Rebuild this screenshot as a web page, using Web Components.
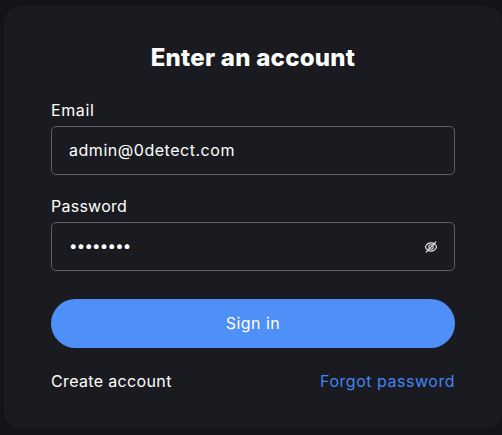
<!DOCTYPE html>
<html lang="en">
<head>
<meta charset="utf-8">
<title>Enter an account</title>
<style>
    html, body{
        height: 100%;
    }
    body{
        margin: 0;
        box-sizing: border-box;
        padding: 6px 0 7px 4px;
        overflow: hidden;
        background-color: #131418;
        color: #ffffff;
        font-family: Inter, "Open Sans", sans-serif;
        font-size: 16px;
        line-height: 20px;
    }
    .email{
        --label-spacing: 0.6px;
        --value-spacing: 0.53px;
    }
    .password{
        --label-spacing: 0.25px;
        --value-size: 15px;
        --value-spacing: -0.75px;
    }
    .forgot{
        letter-spacing: 0.52px;
    }
</style>
</head>
<body>

<login-card>
    <span slot="title">Enter an account</span>
    <form-field class="email" label="Email">admin@0detect.com</form-field>
    <form-field class="password" label="Password">••••••••<eye-icon slot="icon"></eye-icon></form-field>
    <submit-button slot="action">Sign in</submit-button>
    <text-link slot="links">Create account</text-link>
    <text-link class="forgot" slot="links" accent>Forgot password</text-link>
</login-card>

<script>
class LoginCard extends HTMLElement{

    constructor(){
        super();
        this.attachShadow({mode: 'open'});
    }

    connectedCallback(){
        this.shadowRoot.innerHTML = `
        <style>
        :host{
            display: block;
            box-sizing: border-box;
            height: 422px;
            padding: 38px 47px 0;
            border-radius: 16px;
            background-color: #1a1b20;
        }
        h1{
            margin: 0 0 29px;
            font-size: 24px;
            line-height: 28px;
            font-weight: 800;
            letter-spacing: 0.26px;
            text-align: center;
        }
        .fields{
            display: flex;
            flex-direction: column;
            gap: 22px;
            margin-bottom: 28px;
        }
        .links{
            display: flex;
            justify-content: space-between;
            margin-top: 23px;
        }
        </style>

        <h1><slot name="title"></slot></h1>
        <div class="fields"><slot></slot></div>
        <slot name="action"></slot>
        <div class="links"><slot name="links"></slot></div>
        `
    }
}

class FormField extends HTMLElement{

    constructor(){
        super();
        this.attachShadow({mode: 'open'});
    }

    connectedCallback(){
        this.shadowRoot.innerHTML = `
        <style>
        :host{
            display: flex;
            flex-direction: column;
            gap: 7px;
        }
        .label{
            line-height: 18px;
            letter-spacing: var(--label-spacing, 0);
        }
        .box{
            display: flex;
            align-items: center;
            justify-content: space-between;
            box-sizing: border-box;
            height: 49px;
            padding: 0 16px 0 17px;
            border: 1px solid #5d5e62;
            border-radius: 5px;
        }
        .value{
            padding-bottom: 2px;
            font-size: var(--value-size, 16px);
            letter-spacing: var(--value-spacing, 0);
        }
        </style>

        <span class="label">${this.getAttribute('label')}</span>
        <div class="box">
            <span class="value"><slot></slot></span>
            <slot name="icon"></slot>
        </div>
        `
    }
}

class EyeIcon extends HTMLElement{

    constructor(){
        super();
        this.attachShadow({mode: 'open'});
    }

    connectedCallback(){
        this.shadowRoot.innerHTML = `
        <style>
        :host{
            display: block;
            width: 14px;
            height: 14px;
        }
        svg{
            display: block;
        }
        </style>

        <svg width="14" height="14" viewBox="0 0 14 14" fill="none" stroke="#e4e4e5" stroke-width="1.1" stroke-linecap="round">
            <path d="M1.4 7C2.5 4.3 4.5 2.9 7 2.9S11.5 4.3 12.6 7C11.5 9.7 9.5 11.1 7 11.1S2.5 9.7 1.4 7Z"/>
            <circle cx="7" cy="7" r="2.2"/>
            <path d="M2.2 12.2L11.8 1.8"/>
        </svg>
        `
    }
}

class SubmitButton extends HTMLElement{

    constructor(){
        super();
        this.attachShadow({mode: 'open'});
    }

    connectedCallback(){
        this.shadowRoot.innerHTML = `
        <style>
        :host{
            display: block;
        }
        button{
            display: block;
            width: 100%;
            height: 49px;
            padding: 0 0 2px;
            border: none;
            border-radius: 25px;
            background-color: #4f8ff8;
            color: #ffffff;
            font: inherit;
            letter-spacing: 0.45px;
            cursor: pointer;
        }
        </style>

        <button><slot></slot></button>
        `
    }
}

class TextLink extends HTMLElement{

    constructor(){
        super();
        this.attachShadow({mode: 'open'});
    }

    connectedCallback(){
        this.shadowRoot.innerHTML = `
        <style>
        :host{
            display: block;
            letter-spacing: 0.35px;
            cursor: pointer;
        }
        :host([accent]){
            color: #4483f5;
        }
        </style>

        <slot></slot>
        `
    }
}

customElements.define('login-card', LoginCard);
customElements.define('form-field', FormField);
customElements.define('eye-icon', EyeIcon);
customElements.define('submit-button', SubmitButton);
customElements.define('text-link', TextLink);
</script>
</body>
</html>
